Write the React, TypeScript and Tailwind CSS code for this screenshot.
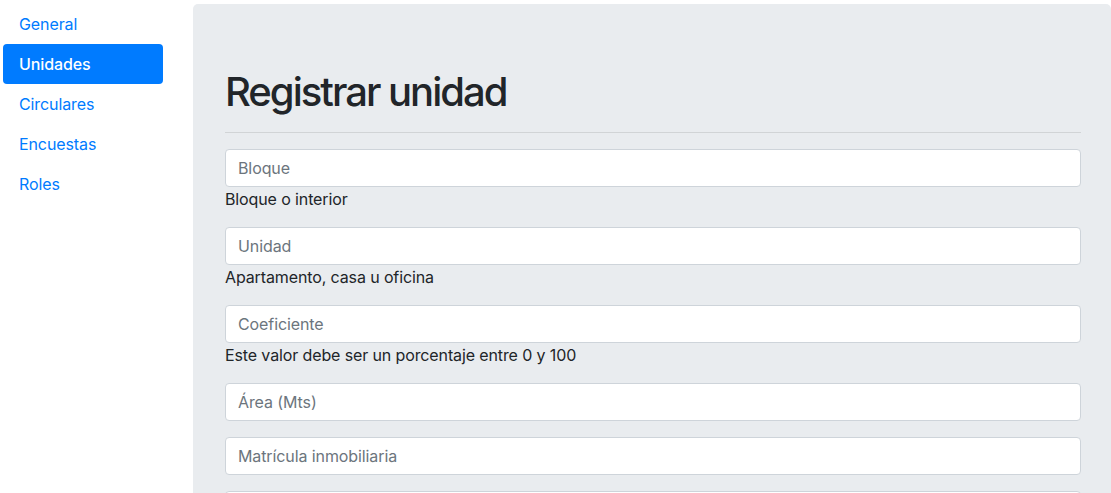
import React from "react";

const font = { fontFamily: 'Inter, "Noto Sans", "Liberation Sans", sans-serif' };

const navItems = ["General", "Unidades", "Circulares", "Encuestas", "Roles"];

function Field({ placeholder, help }: { placeholder: string; help?: string }) {
  return (
    <div className="mb-4">
      <input
        type="text"
        placeholder={placeholder}
        className="block w-full h-[38px] px-3 py-[6px] text-[16px] leading-6 text-[#495057] bg-white border border-[#ced4da] rounded-[4px] placeholder:text-[#6c757d] outline-none tracking-[-0.1px]"
      />
      {help && <div className="text-[16px] leading-6 text-[#212529] tracking-[-0.12px]">{help}</div>}
    </div>
  );
}

export default function App() {
  return (
    <div className="flex w-[1111px] h-[493px] overflow-hidden bg-white pt-1 text-[#212529]" style={font}>
      <nav className="ml-[3px] w-[160px] shrink-0 flex flex-col">
        {navItems.map((item) => (
          <a
            key={item}
            href="#"
            className={
              "block px-4 py-2 text-[16px] leading-6 rounded-[4px] tracking-[-0.1px] " +
              (item === "Unidades" ? "bg-[#007bff] text-white font-medium" : "text-[#007bff]")
            }
          >
            {item}
          </a>
        ))}
      </nav>
      <main className="ml-[30px] w-[918px] h-[520px] shrink-0 bg-[#e9ecef] rounded-[5px] pt-16 pl-8 pr-[30px]">
        <h1 className="text-[40px] leading-[1.2] font-medium text-[#212529] tracking-[-2px]">Registrar unidad</h1>
        <hr className="mt-4 mb-4 border-0 border-t border-[rgba(0,0,0,0.1)]" />
        <form>
          <Field placeholder="Bloque" help="Bloque o interior" />
          <Field placeholder="Unidad" help="Apartamento, casa u oficina" />
          <Field placeholder="Coeficiente" help="Este valor debe ser un porcentaje entre 0 y 100" />
          <Field placeholder="Área (Mts)" />
          <Field placeholder="Matrícula inmobiliaria" />
          <Field placeholder="" />
        </form>
      </main>
    </div>
  );
}
